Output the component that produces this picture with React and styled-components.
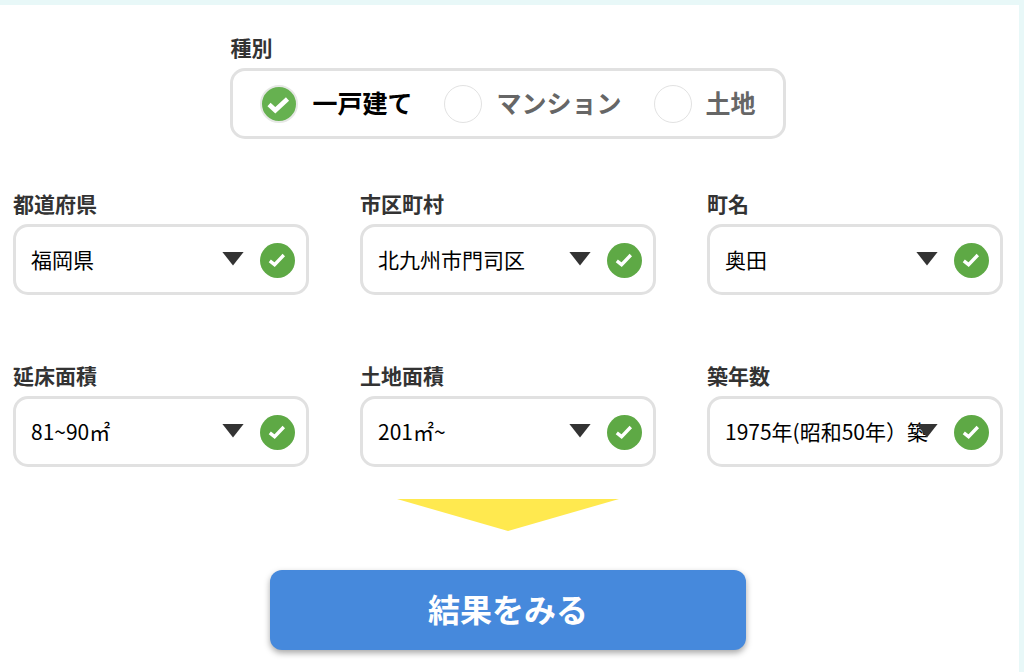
import React, { Fragment, useState } from "react";
import styled, { createGlobalStyle } from "styled-components";


const GlobalStyle = createGlobalStyle`
  * {
    box-sizing: border-box;
  }

  body {
    margin: 0;
    background: #e8f8f8;
    font-family: "Noto Sans CJK JP", sans-serif;
    color: #333;
  }
`;

const Page = styled.div`
  display: flex;
  min-height: 100vh;
  padding: 5px 5px 0 0;
`;

const Form = styled.form`
  flex: 1;
  display: flex;
  flex-direction: column;
  align-items: center;
  padding: 24px 16px 20px 13px;
  background: #fff;
`;

const TypeField = styled.fieldset`
  margin: 0 0 46px;
  padding: 0;
  border: 0;
`;

const Legend = styled.legend`
  padding: 0 0 3px;
  font-size: 21px;
  font-weight: 700;
  line-height: 36px;
`;

const TypeBox = styled.div`
  display: flex;
  align-items: center;
  gap: 32px;
  height: 71px;
  padding: 0 27px;
  border: 3px solid #e1e1e1;
  border-radius: 15px;
`;

const TypeLabel = styled.label`
  display: flex;
  align-items: center;
  gap: 14px;
  font-size: 25px;
  font-weight: 700;
  line-height: 38px;
  color: ${({ $active }) => ($active ? "#000" : "#666")};
  cursor: pointer;
`;

const TypeName = styled.span`
  padding-bottom: 4px;
`;

const RadioMark = styled.span`
  position: relative;
  display: flex;
  width: 38px;
  height: 38px;
`;

const Radio = styled.input`
  appearance: none;
  width: 38px;
  height: 38px;
  margin: 0;
  border: 1px solid #e2e2e2;
  border-radius: 50%;
  background: #fff;
  cursor: pointer;

  &:checked {
    border: 2px solid #e6e8e5;
    background: #66b150;
  }
`;

const RadioCheck = styled.svg`
  position: absolute;
  inset: 0;
  pointer-events: none;
`;

const Fields = styled.div`
  display: grid;
  grid-template-columns: repeat(3, minmax(0, 1fr));
  gap: 62px 51px;
  width: 100%;
`;

const FieldLabel = styled.label`
  display: block;
  padding-bottom: 3px;
  font-size: 21px;
  font-weight: 700;
  line-height: 36px;
`;

const SelectBox = styled.div`
  position: relative;
`;

const Select = styled.select`
  appearance: none;
  display: block;
  width: 100%;
  height: 71px;
  padding: 0 68px 2px 15px;
  border: 3px solid #e1e1e1;
  border-radius: 15px;
  background: #fff;
  color: #000;
  font-family: inherit;
  font-size: 21px;
  cursor: pointer;
`;

const Marks = styled.div`
  position: absolute;
  top: 0;
  right: 14px;
  bottom: 0;
  display: flex;
  align-items: center;
  gap: 16px;
  padding-top: 2px;
  pointer-events: none;
`;

const Arrow = styled.span`
  width: 22px;
  height: 14px;
  margin-bottom: 4px;
  background: #333;
  clip-path: polygon(0 0, 100% 0, 50% 100%);
`;

const YellowArrow = styled.div`
  width: 222px;
  height: 32px;
  margin: 32px 0 39px;
  background: #ffe94f;
  clip-path: polygon(0 0, 100% 0, 50% 100%);
`;

const Submit = styled.button`
  width: 100%;
  max-width: 476px;
  height: 80px;
  padding: 0 0 4px;
  border: 0;
  border-radius: 12px;
  background: #4689dc;
  box-shadow: 0 3px 6px rgba(0, 0, 0, 0.35);
  color: #fff;
  font-family: inherit;
  font-size: 32px;
  font-weight: 700;
  cursor: pointer;
`;


const types = ["一戸建て", "マンション", "土地"];

const fields = [
  { id: "prefecture", label: "都道府県", value: "福岡県" },
  { id: "city", label: "市区町村", value: "北九州市門司区" },
  { id: "town", label: "町名", value: "奥田" },
  { id: "floor", label: "延床面積", value: "81~90㎡" },
  { id: "land", label: "土地面積", value: "201㎡~" },
  { id: "age", label: "築年数", value: "1975年(昭和50年）築" },
];


const TypeOption = ({ name, active, onSelect }) => {
  return (
    <TypeLabel $active={active}>
      <RadioMark>
        <Radio type="radio" name="type" value={name} checked={active} onChange={onSelect} />
        {active && (
          <RadioCheck viewBox="0 0 38 38" aria-hidden="true">
            <path
              d="M9 19.5 L15.3 25.3 L27.5 14"
              fill="none"
              stroke="#fff"
              strokeWidth="4.6"
            />
          </RadioCheck>
        )}
      </RadioMark>
      <TypeName>{name}</TypeName>
    </TypeLabel>
  );
};

const SelectField = ({ id, label, value }) => {
  return (
    <div>
      <FieldLabel htmlFor={id}>{label}</FieldLabel>
      <SelectBox>
        <Select id={id} defaultValue={value}>
          <option value={value}>{value}</option>
        </Select>
        <Marks>
          <Arrow />
          <svg width="35" height="35" viewBox="0 0 35 35" aria-hidden="true">
            <circle cx="17.5" cy="17.5" r="17.5" fill="#5ea945" />
            <path d="M9.8 17.8 L14.6 21.6 L23.8 12" fill="none" stroke="#fff" strokeWidth="3.4" />
          </svg>
        </Marks>
      </SelectBox>
    </div>
  );
};


export default function App() {
  const [type, setType] = useState(types[0]);

  return (
    <Fragment>
      <GlobalStyle />
      <Page>
        <Form onSubmit={(e) => e.preventDefault()}>
          <TypeField>
            <Legend>種別</Legend>
            <TypeBox>
              {types.map((name) => (
                <TypeOption
                  key={name}
                  name={name}
                  active={name === type}
                  onSelect={() => setType(name)}
                />
              ))}
            </TypeBox>
          </TypeField>
          <Fields>
            {fields.map((field) => (
              <SelectField key={field.id} {...field} />
            ))}
          </Fields>
          <YellowArrow />
          <Submit type="submit">結果をみる</Submit>
        </Form>
      </Page>
    </Fragment>
  );
}
